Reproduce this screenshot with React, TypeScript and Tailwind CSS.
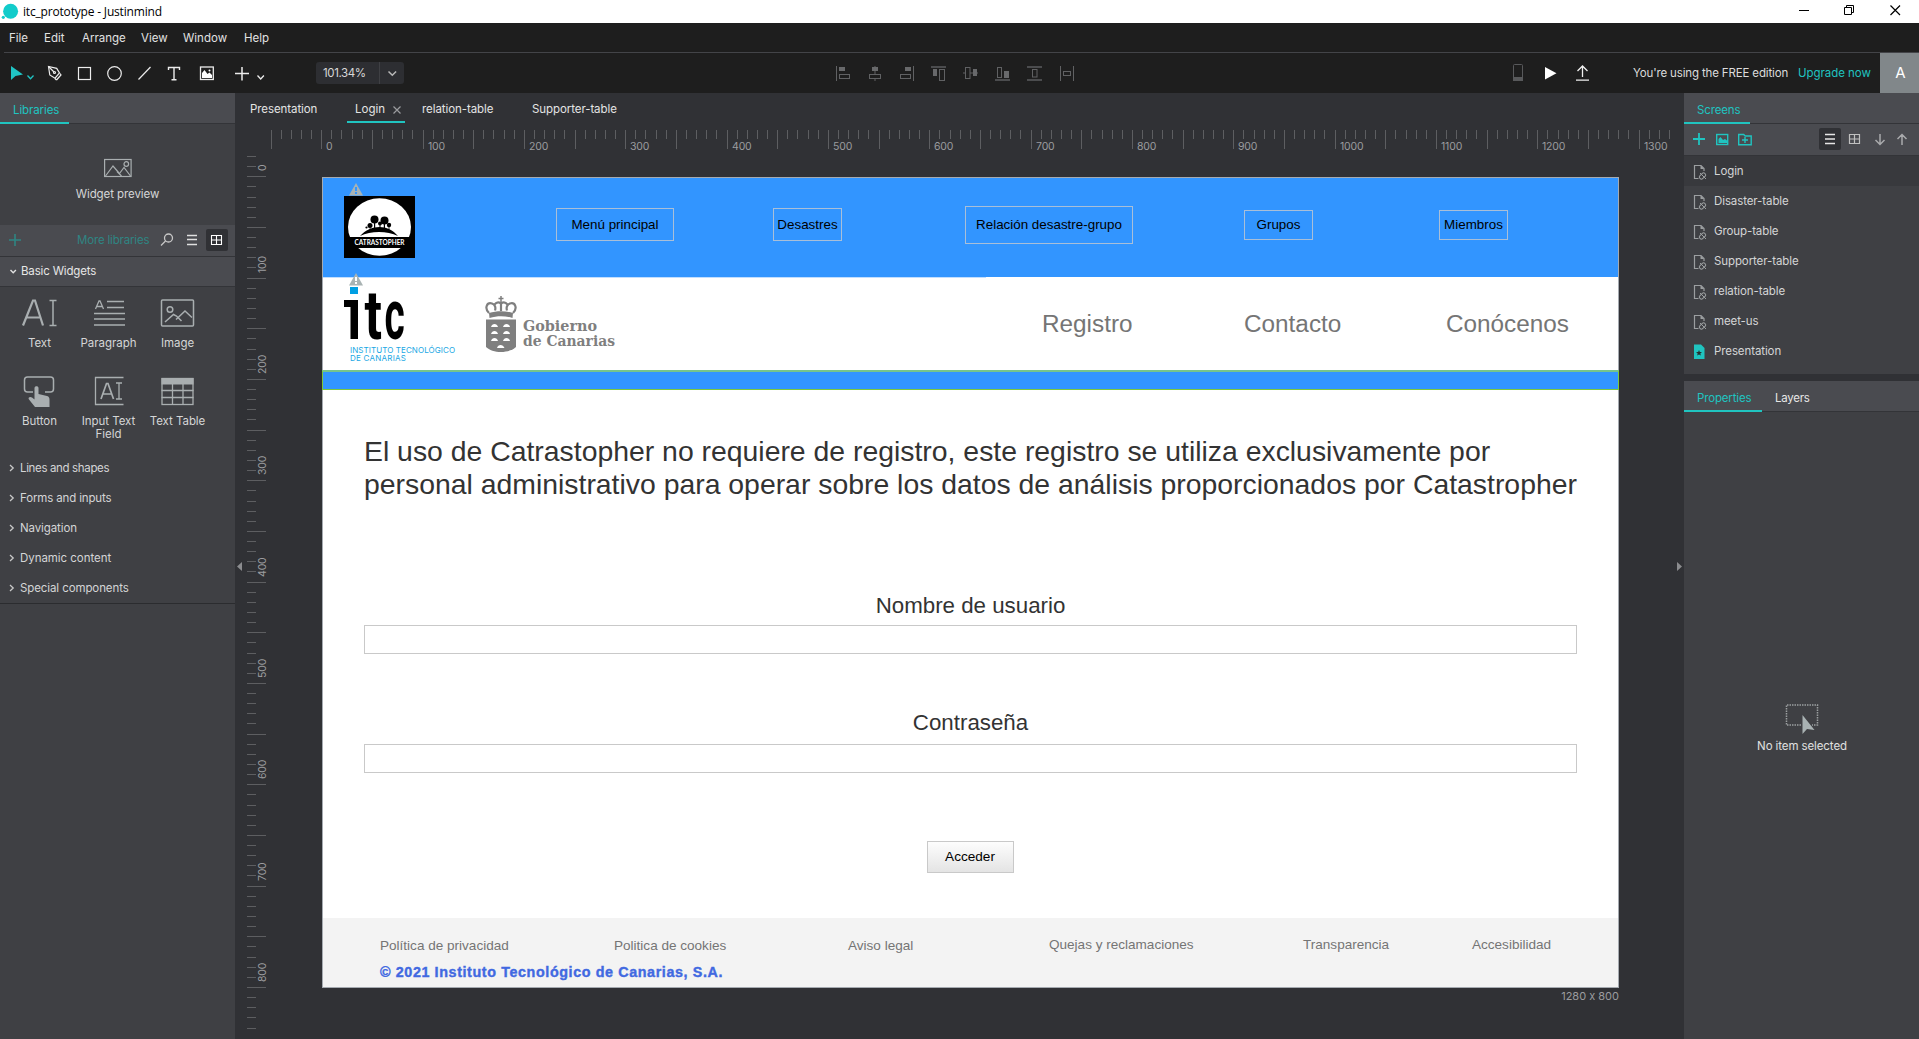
import type { ReactNode } from "react";

/* Icon cell: the viewBox uses window coordinates so neighbouring cells share one grid. */
function Cell({ x, y, w, h, children }: { x: number; y: number; w: number; h: number; children: ReactNode }) {
  return (
    <svg className="block shrink-0" width={w} height={h} viewBox={`${x} ${y} ${w} ${h}`} fill="none">
      {children}
    </svg>
  );
}

function TitleBar() {
  return (
    <div className="flex h-[23px] shrink-0 items-center bg-white">
      <Cell x={0} y={0} w={23} h={23}>
        <circle cx="10.6" cy="11.3" r="7.5" fill="#12cccb" />
        <circle cx="3.3" cy="17.3" r="1.6" fill="#12cccb" />
      </Cell>
      <span className="font-['Open_Sans'] text-[12px] tracking-[-0.18px] text-black">itc_prototype - Justinmind</span>
      <div className="ml-auto flex">
        <Cell x={1780} y={0} w={139} h={23}>
          <g stroke="#000" strokeWidth="1">
            <path d="M1799 10.5h10" />
            <path d="M1844.5 7.5h7v7h-7z" />
            <path d="M1846.5 7.5v-2h7v7h-2" />
            <path d="M1890.5 5.5l9.5 9.5M1900 5.5l-9.5 9.5" strokeWidth="1.2" />
          </g>
        </Cell>
      </div>
    </div>
  );
}

const menu: [string, string][] = [
  ["File", "w-[35px]"],
  ["Edit", "w-[38px]"],
  ["Arrange", "w-[59px]"],
  ["View", "w-[42px]"],
  ["Window", "w-[61px]"],
  ["Help", "w-[40px]"],
];

function MenuBar() {
  return (
    <div className="flex h-[29px] shrink-0 items-center bg-[#1e1e1e] pt-[2px] pl-[9px] text-[11.5px] text-[#e2e2e2]">
      {menu.map(([t, w]) => (
        <span key={t} className={w}>
          {t}
        </span>
      ))}
    </div>
  );
}

function ToolBar() {
  return (
    <div className="flex h-[41px] shrink-0 bg-[#1e1e1e]">
      <div className="ml-1 flex flex-1 border-t border-[#434448]">
        <Cell x={4} y={53} w={40} h={40}>
          <path d="M11 66v14l4.5-4 7.500-1.500z" fill="#20c4c4" />
          <path d="M27.500 75.500l3 3.200 3-3.200" stroke="#20c4c4" strokeWidth="1.300" />
        </Cell>
        <Cell x={44} y={53} w={26} h={40}>
          <g stroke="#ececec" strokeWidth="1.200">
            <path d="M48.500 66.500l1.300 8.500 5.200 3.200 4.500-5.200-2.800-4.600z" />
            <path d="M48.500 66.500l5.500 5.500" />
            <circle cx="54.500" cy="72.500" r="1" />
            <path d="M56.500 80l4.500-5-1-1.500M55 78.500l1.500 1.500" />
          </g>
        </Cell>
        <Cell x={70} y={53} w={30} h={40}>
          <rect x="78.500" y="67.500" width="12" height="12" stroke="#ececec" strokeWidth="1.200" />
        </Cell>
        <Cell x={100} y={53} w={30} h={40}>
          <circle cx="114.500" cy="73.500" r="6.800" stroke="#ececec" strokeWidth="1.200" />
        </Cell>
        <Cell x={130} y={53} w={30} h={40}>
          <path d="M138.500 79.500l12-12.500" stroke="#ececec" strokeWidth="1.200" />
        </Cell>
        <Cell x={160} y={53} w={30} h={40}>
          <path d="M168.500 70v-2.500h11V70M174 67.500v12.500M171.500 79.700h5" stroke="#ececec" strokeWidth="1.400" />
        </Cell>
        <Cell x={190} y={53} w={35} h={40}>
          <rect x="200.500" y="67" width="12.800" height="12.500" stroke="#ececec" strokeWidth="1.300" />
          <path d="M202 78v-5l2.500-3 3 4 2-1.500 2.500 2.500v3z" fill="#fff" />
          <circle cx="209.500" cy="70.500" r="1" fill="#fff" />
        </Cell>
        <Cell x={225} y={53} w={91} h={40}>
          <path d="M235 73.500h14M242 67v13.500" stroke="#ececec" strokeWidth="1.500" />
          <path d="M257.500 75.500l3.200 3.500 3.200-3.500" stroke="#ececec" strokeWidth="1.300" />
        </Cell>
        <div className="mt-[9px] flex h-[22px] w-[88px] items-center rounded-[3px] bg-[#2d2e32] text-[11.500px] text-[#d8d8d8]">
          <span className="w-[63px] pt-[2px] pl-[7px] tracking-[-0.4px]">101.34%</span>
          <span className="h-[22px] w-px bg-[#3f4044]" />
          <Cell x={380} y={62} w={24} h={22}>
            <path d="M388.500 71.500l3.800 3.800 3.800-3.800" stroke="#b8b8b8" strokeWidth="1.500" />
          </Cell>
        </div>
        <div className="ml-[416px]">
          <Cell x={820} y={53} w={270} h={40}>
            <g stroke="#606163" strokeWidth="1">
              <path d="M836.500 66v15M875 66v15M913.500 66v15M963 73h15M1060.500 66v15M1073.500 66v15" />
              <g stroke="#4b4c4e" strokeWidth="2">
                <path d="M931 67h15M995 80h15M1027 67h15M1027 80h15" />
              </g>
              <g fill="#1e1e1e">
                <rect x="839.500" y="74.500" width="10" height="4" />
                <rect x="869.500" y="74.500" width="11" height="4" />
                <rect x="900.500" y="74.500" width="10" height="4" />
                <rect x="939.500" y="69.500" width="5" height="11" />
                <rect x="965.500" y="67.500" width="4.500" height="11" />
                <rect x="997.500" y="67.500" width="4" height="10" />
                <rect x="1032.500" y="69.500" width="4.500" height="7.500" />
                <rect x="1063.500" y="71.500" width="7" height="4" />
              </g>
            </g>
            <g fill="#68696b">
              <path d="M839 67h6v4h-6zM872 67h6v4h-6zM905 67h6v4h-6zM933 69h4v7h-4zM973 69h4v7h-4zM1004 71h5v7h-5z" />
            </g>
          </Cell>
        </div>
        <div className="ml-auto flex">
          <Cell x={1500} y={53} w={100} h={40}>
            <rect x="1513.500" y="64.500" width="9" height="15.500" rx="1" stroke="#58595b" />
            <path d="M1513 77h10v4h-10z" fill="#58595b" />
            <path d="M1545 67l11.500 6.200-11.500 6.200z" fill="#fff" />
            <path d="M1582.500 77V66M1577.500 71l5-5 5 5M1576 80.200h13" stroke="#f0f0f0" strokeWidth="1.300" />
          </Cell>
          <div className="flex items-center pt-[2px] pl-[33px] text-[11.500px]">
            <span className="w-[165px] tracking-[-0.15px] whitespace-nowrap text-[#dcdcdc]">You're using the FREE edition</span>
            <span className="w-[82px] tracking-[-0.05px] whitespace-nowrap text-[#20c4c0]">Upgrade now</span>
          </div>
          <div className="flex h-[40px] w-[39px] items-center justify-center bg-[#81878a] pt-px pl-[2px] text-[15px] text-white">A</div>
        </div>
      </div>
    </div>
  );
}

const widgets: { label: string; icon: ReactNode }[] = [
  {
    label: "Text",
    icon: (
      <g stroke="#a9aeb0" strokeWidth="1.800">
        <path d="M7 30.500L17 5.500h2l8 25M10.500 22.500h13" strokeWidth="2.200" />
        <path d="M33.500 5.500h7M33.500 30.500h7M37 5.500v25" strokeWidth="1.500" />
      </g>
    ),
  },
  {
    label: "Paragraph",
    icon: (
      <g stroke="#a9aeb0" strokeWidth="1.600">
        <path d="M10.500 14l3.500-8h1l3.500 8M12 11.500h5.500" strokeWidth="1.300" />
        <path d="M22 6.500h17M22 12.500h17M9 18.500h31M9 24h31M9 30h31" />
      </g>
    ),
  },
  {
    label: "Image",
    icon: (
      <g stroke="#a9aeb0" strokeWidth="1.500">
        <rect x="7.500" y="5" width="32" height="26" rx="1" />
        <circle cx="16" cy="14.500" r="2.800" />
        <path d="M11 27l8.500-7.500 3 1.500 5 5M22 24.500l9-8.500 7 6.500" />
      </g>
    ),
  },
  {
    label: "Button",
    icon: (
      <g>
        <path d="M18 20h-5.500a3 3 0 0 1-3-3V8a3 3 0 0 1 3-3h23a3 3 0 0 1 3 3v9a3 3 0 0 1-3 3H30" transform="translate(-1 -1)" stroke="#a9aeb0" strokeWidth="1.500" />
        <path d="M19.500 16c0-2.500 4-2.500 4 0v6l8.500 2c2 .5 2.500 2 2.500 4v7H20l-6-7.500c-1.500-2 1-3.500 3-2l2.500 2z" transform="translate(-1 -1)" fill="#a9aeb0" />
      </g>
    ),
  },
  {
    label: "Input Text Field",
    icon: (
      <g stroke="#a9aeb0" strokeWidth="1.300" transform="translate(0 -1)">
        <path d="M38.500 5.500H10.500v27h28" />
        <path d="M16 27l5.500-15.500h1.500L28.500 27M18 22h9" strokeWidth="1.700" />
        <path d="M31 11h6M31 27h6M34 11v16" />
      </g>
    ),
  },
  {
    label: "Text Table",
    icon: (
      <g stroke="#a9aeb0" strokeWidth="1.300" transform="translate(-.5 -1)">
        <rect x="8.500" y="6.500" width="31" height="26" />
        <path d="M8 6h32v6.500H8z" fill="#a9aeb0" stroke="none" />
        <path d="M8 18.500h32M8 25.500h32M19 12v20M29.500 12v20" />
      </g>
    ),
  },
];

const groups: [string, string][] = [
  ["Lines and shapes", "tracking-[-0.35px]"],
  ["Forms and inputs", "tracking-[-0.15px]"],
  ["Navigation", "tracking-[-0.1px]"],
  ["Dynamic content", "tracking-[-0.05px]"],
  ["Special components", "tracking-[-0.1px]"],
];

function LibrariesPanel() {
  return (
    <aside className="flex w-[235px] shrink-0 flex-col bg-[#3f4044] text-[11.500px] text-[#d4d5d6]">
      <div className="flex h-[31px] shrink-0 border-b border-[#333438] bg-[#4a4b50]">
        <div className="-mb-px flex w-[69px] items-center border-b-2 border-[#20c4c0] pt-[7px] pl-[13px] tracking-[-0.1px] text-[#20c4c0]">Libraries</div>
      </div>
      <div className="flex h-[101px] shrink-0 flex-col items-center pt-[34px]">
        <svg width="28" height="20" viewBox="0 0 28 20" fill="none" stroke="#a9aeb0" strokeWidth="1.200">
          <rect x=".6" y="1.500" width="26.500" height="17" />
          <path d="M1.500 18L9 8l6 7M13 13.500l4.500 4.500M15.500 15.500L20 9.500l6.500 8.500" />
          <circle cx="22.300" cy="6" r="2.300" />
        </svg>
        <span className="mt-[8px] tracking-[-0.08px]">Widget preview</span>
      </div>
      <div className="flex h-[32px] shrink-0 items-center border-b border-[#333438] bg-[#4a4b50]">
        <Cell x={0} y={225} w={77} h={31}>
          <path d="M9 240h12M15 234v12" stroke="#2f8583" strokeWidth="1.600" />
        </Cell>
        <span className="w-[73px] tracking-[-0.18px] whitespace-nowrap text-[#2f8583]">More libraries</span>
        <Cell x={150} y={225} w={85} h={31}>
          <rect x="206" y="229" width="22" height="22" rx="2" fill="#303135" />
          <circle cx="168.500" cy="238" r="4" stroke="#c8c8c8" strokeWidth="1.300" />
          <path d="M165.500 241l-4.500 4.500" stroke="#c8c8c8" strokeWidth="1.300" />
          <path d="M187 235.500h10M187 239.500h10M187 244.500h10" stroke="#e0e0e0" strokeWidth="1.300" />
          <path d="M211.500 235.500h10v9h-10zM216.500 235v10M211 240h11" stroke="#fff" strokeWidth="1.100" />
        </Cell>
      </div>
      <div className="flex h-[30px] shrink-0 items-center border-b border-[#333438] bg-[#4a4b50] text-[#e6e6e6]">
        <Cell x={0} y={257} w={21} h={29}>
          <path d="M10.500 270l2.700 2.800 2.700-2.800" stroke="#e0e0e0" strokeWidth="1.400" />
        </Cell>
        <span className="tracking-[-0.16px]">Basic Widgets</span>
      </div>
      <div className="grid h-[166px] shrink-0 grid-cols-[69px_69px_69px] grid-rows-[78px_88px] pl-[5px]">
        {widgets.map((w) => (
          <div key={w.label} className="flex flex-col items-center pt-[8px] text-center">
            <svg width="48" height="38" viewBox="0 0 48 38" fill="none" className="shrink-0">
              {w.icon}
            </svg>
            <span className="mt-[4px] w-[60px] leading-[13px] tracking-[-0.05px]">{w.label}</span>
          </div>
        ))}
      </div>
      <div className="flex h-[151px] shrink-0 flex-col border-b border-[#2b2c2f]">
        {groups.map(([g, tracking]) => (
          <div key={g} className="flex h-[30px] shrink-0 items-center">
            <svg width="20" height="12" viewBox="0 0 20 12" fill="none">
              <path d="M10 3l3.200 3-3.200 3" stroke="#c8c8c8" strokeWidth="1.300" />
            </svg>
            <span className={`pt-[2px] ${tracking}`}>{g}</span>
          </div>
        ))}
      </div>
    </aside>
  );
}

const hTicks = Array.from({ length: 139 }, (_, i) => i - 5);
const vTicks = Array.from({ length: 87 }, (_, i) => i - 2);

function HorizontalRuler() {
  return (
    <svg className="block shrink-0" width="1449" height="28" viewBox="235 125 1449 28" shapeRendering="crispEdges">
      {hTicks.map((n) => (
        <rect key={n} x={Math.floor(321.7 + n * 10.134)} y="130" width="1" height={n % 5 === 0 ? 19 : 9} fill="#5d5e61" />
      ))}
      {hTicks
        .filter((n) => n % 10 === 0)
        .map((n) => (
          <text key={n} x={Math.floor(321.7 + n * 10.134) + 5} y="150" fontSize="10.500" letterSpacing="-.15" fill="#9b9c9f">
            {n * 10}
          </text>
        ))}
    </svg>
  );
}

function VerticalRuler() {
  return (
    <svg className="block shrink-0" width="87" height="886" viewBox="235 153 87 886">
      {vTicks.map((n) => (
        <rect key={n} x="247" y={Math.floor(176.75 + n * 10.134)} width={n % 5 === 0 ? 19 : 9} height="1" fill="#5d5e61" />
      ))}
      {vTicks
        .filter((n) => n % 10 === 0)
        .map((n) => {
          const y = Math.floor(176.75 + n * 10.134) - 5;
          return (
            <text key={n} x="266" y={y} fontSize="10.500" letterSpacing="-.15" fill="#9b9c9f" transform={`rotate(-90 266 ${y})`}>
              {n * 10}
            </text>
          );
        })}
      <path d="M242 562v9l-5-4.500z" fill="#8b8c8f" />
    </svg>
  );
}

function Warning({ mark }: { mark: string }) {
  return (
    <svg width="14" height="13" viewBox="0 0 14 13" className="block">
      <path d="M7 0l7 12.500H0z" fill="#a9b3b3" />
      <path d="M6 4h2v4H6zM6 9h2v2H6z" fill={mark} />
    </svg>
  );
}

function CatastropherLogo() {
  return (
    <svg width="71" height="62" viewBox="0 0 71 62" className="block">
      <rect width="71" height="62" fill="#000" />
      <ellipse cx="35.500" cy="31" rx="31.500" ry="28.800" fill="#fff" />
      <rect y="41" width="71" height="11" fill="#000" />
      <g fill="#000">
        <path d="M16 40c11-12 28-12 38 0-11-5.500-27-5.500-38 0z" />
        <circle cx="30.500" cy="23.500" r="4" />
        <circle cx="40.500" cy="24.500" r="4" />
        <circle cx="26" cy="29.500" r="2.500" />
        <circle cx="45" cy="29" r="2.200" />
        <circle cx="36" cy="27.500" r="2" />
        <circle cx="22.500" cy="31.500" r="1.100" />
        <path d="M30 25h1.200v8H30zM39.800 25H41v8h-1.200zM35.500 28h1v5h-1zM25.700 30h.8v4h-.8zM44.600 30h.8v4h-.8z" />
      </g>
      <text x="10.500" y="49" fontSize="6.800" fontWeight="700" fill="#fff" textLength="50" lengthAdjust="spacingAndGlyphs" fontFamily="Lato, sans-serif">
        CATRASTOPHER
      </text>
    </svg>
  );
}

function ItcLogo() {
  return (
    <svg width="114" height="80" viewBox="344 285 114 80" className="block overflow-visible">
      <defs>
        <clipPath id="stem">
          <rect x="340" y="300" width="30" height="50" />
        </clipPath>
      </defs>
      <g fontFamily="Roboto, sans-serif" fontWeight="700" fontSize="72" fill="#000">
        <g clipPath="url(#stem)">
          <text transform="translate(349.300 339) scale(.5 1.040)">i</text>
        </g>
        <text transform="translate(364.500 338.500) scale(.72 .950)">t</text>
        <text transform="translate(384.500 338.500) scale(.540 .980)">c</text>
      </g>
      <path d="M344 300h14v39h-7.500v-32H344z" fill="#000" />
      <rect x="350" y="287" width="8" height="7" fill="#009fe3" />
      <g fontSize="8" fill="#1aa7e4" fontFamily="Inter, sans-serif">
        <text x="350" y="353" textLength="105">
          INSTITUTO TECNOLÓGICO
        </text>
        <text x="350" y="361" textLength="56">
          DE CANARIAS
        </text>
      </g>
    </svg>
  );
}

function GobiernoLogo() {
  return (
    <svg width="134" height="60" viewBox="484 294 134 60" className="block">
      <g fill="none" stroke="#7f7f7f" strokeWidth="2.200">
        <path d="M501 296v6M498.500 298.500h5" strokeWidth="1.500" />
        <path d="M489 313c-5-5-2-11 3-9.500 3 1 4 4 3 7M513 313c5-5 2-11-3-9.500-3 1-4 4-3 7M494.500 304.500c2-2.500 4.500-2.500 6.500-1 2-1.500 4.500-1.500 6.500 1M501 303v8" />
      </g>
      <path d="M489 313c8-2.500 16-2.500 24 0l-.5 5c-8-2.500-15-2.500-23 0z" fill="#7f7f7f" />
      <path d="M486 319.500h30V347c-3 3-9 5-15 5s-12-2-15-5z" fill="#7f7f7f" />
      <g fill="#fff">
        <path d="M491 327c1-4 6-4 7 0zM503 327c1-4 6-4 7 0zM491 334c1-4 6-4 7 0zM503 334c1-4 6-4 7 0zM491 341c1-4 6-4 7 0zM503 341c1-4 6-4 7 0zM497 348c1-4 6-4 7.500 0z" />
      </g>
      <g fill="#7f7f7f" fontFamily="'DejaVu Serif', serif" fontWeight="700" fontSize="14.500">
        <text x="523" y="331" textLength="74" lengthAdjust="spacingAndGlyphs">
          Gobierno
        </text>
        <text x="523" y="345.500" textLength="92" lengthAdjust="spacingAndGlyphs">
          de Canarias
        </text>
      </g>
    </svg>
  );
}

/* Free-canvas widgets of the prototype; offsets are relative to their section. */
const navButtons: [string, string][] = [
  ["Menú principal", "left-[233px] top-[30px] h-[33px] w-[118px]"],
  ["Desastres", "left-[450px] top-[30px] h-[33px] w-[69px]"],
  ["Relación desastre-grupo", "left-[642px] top-[28px] h-[38px] w-[168px]"],
  ["Grupos", "left-[921px] top-[32px] h-[30px] w-[69px]"],
  ["Miembros", "left-[1116px] top-[32px] h-[30px] w-[69px]"],
];

const footerLinks: [string, string][] = [
  ["Política de privacidad", "left-[57px] top-[19px]"],
  ["Politica de cookies", "left-[291px] top-[19px]"],
  ["Aviso legal", "left-[525px] top-[19px]"],
  ["Quejas y reclamaciones", "left-[726px] top-[18px]"],
  ["Transparencia", "left-[980px] top-[18px]"],
  ["Accesibilidad", "left-[1149px] top-[18px]"],
];

function Page() {
  return (
    <div className="h-[811px] w-[1297px] border border-[#a5aab0] bg-white font-['Liberation_Sans'] whitespace-nowrap text-[#333]">
      <div className="relative h-[99px] bg-[#3295ff] text-black">
        <div className="absolute top-[5px] left-[26px]">
          <Warning mark="#3295ff" />
        </div>
        <div className="absolute top-[18px] left-[21px]">
          <CatastropherLogo />
        </div>
        {navButtons.map(([t, c]) => (
          <div key={t} className={`absolute flex items-center justify-center border border-[#a9bfd8] pt-px text-[13.400px] ${c}`}>
            {t}
          </div>
        ))}
      </div>
      <div className="relative h-[93px]">
        <div className="h-px w-[663px] bg-[#c1deff]" />
        <div className="absolute top-[8px] left-[21px]">
          <ItcLogo />
        </div>
        <div className="absolute top-[-4px] left-[26px]">
          <Warning mark="#ffffff" />
        </div>
        <div className="absolute top-[17px] left-[161px]">
          <GobiernoLogo />
        </div>
        <div className="absolute top-[33px] left-[719px] text-[24.320px] leading-[28px] text-[#757575]">Registro</div>
        <div className="absolute top-[33px] left-[921px] text-[24.320px] leading-[28px] text-[#757575]">Contacto</div>
        <div className="absolute top-[33px] left-[1123px] text-[24.320px] leading-[28px] text-[#757575]">Conócenos</div>
      </div>
      <div className="-mx-px h-[20px] border border-t-2 border-[#7cc83c] border-t-[#76c48c] bg-[#3295ff]" />
      <div className="flex h-[528px] flex-col px-[41px]">
        <p className="mt-[45px] h-[66px] text-[28.390px] leading-[33px]">
          El uso de Catrastopher no requiere de registro, este registro se utiliza exclusivamente por
          <br />
          personal administrativo para operar sobre los datos de análisis proporcionados por Catastropher
        </p>
        <label className="mt-[91px] block h-[28px] text-center text-[22.300px] leading-[28px]">Nombre de usuario</label>
        <div className="mt-[5px] h-[29px] w-[1213px] shrink-0 border border-[#c9c9c9]" />
        <label className="mt-[55px] block h-[28px] text-center text-[22.300px] leading-[28px]">Contraseña</label>
        <div className="mt-[7px] h-[29px] w-[1213px] shrink-0 border border-[#c9c9c9]" />
        <div className="mt-[68px] mr-px flex h-[32px] w-[87px] items-center justify-center self-center border border-[#c9c9c9] bg-linear-to-b from-[#fdfdfd] to-[#e4e4e4] pt-px text-[13.600px] text-black">
          Acceder
        </div>
      </div>
      <div className="relative h-[69px] bg-[#f3f3f3] text-[13.550px] text-[#757575]">
        {footerLinks.map(([t, c]) => (
          <span key={t} className={`absolute leading-[17px] ${c}`}>
            {t}
          </span>
        ))}
        <span className="absolute top-[46px] left-[57px] text-[14.300px] leading-[17px] font-bold tracking-[0.620px] text-[#4169e1] [-webkit-text-stroke:0.400px_#4169e1]">
          © 2021 Instituto Tecnológico de Canarias, S.A.
        </span>
      </div>
    </div>
  );
}

function Editor() {
  return (
    <main className="flex w-[1449px] shrink-0 flex-col bg-[#303135]">
      <div className="flex h-[32px] shrink-0 pl-[15px] text-[11.500px] text-[#e4e4e4]">
        <span className="flex h-[32px] w-[97px] items-center pt-[2px] tracking-[-0.08px]">Presentation</span>
        <span className="flex h-[30px] w-[58px] items-center justify-between border-b-2 border-[#20c4c0] pt-[6px] pr-[4px] pl-[8px]">
          Login
          <svg width="8" height="8" viewBox="0 0 8 8" stroke="#9b9c9f" strokeWidth="1.200">
            <path d="M.5.5l7 7M7.500.5l-7 7" />
          </svg>
        </span>
        <span className="flex h-[32px] w-[110px] items-center pt-[2px] pl-[17px] tracking-[-0.08px]">relation-table</span>
        <span className="flex h-[32px] items-center pt-[2px] pl-[17px] tracking-[-0.08px]">Supporter-table</span>
      </div>
      <HorizontalRuler />
      <div className="flex h-[886px]">
        <VerticalRuler />
        <div className="flex w-[1297px] flex-col pt-[24px]">
          <Page />
          <span className="mt-[1px] self-end text-[11px] leading-[15px] text-[#9b9c9f] [font-feature-settings:'calt'_0]">1280 x 800</span>
        </div>
        <div className="flex-1">
          <Cell x={1619} y={153} w={65} h={886}>
            <path d="M1677 562v9l5-4.500z" fill="#8b8c8f" />
          </Cell>
        </div>
      </div>
    </main>
  );
}

const screens = ["Login", "Disaster-table", "Group-table", "Supporter-table", "relation-table", "meet-us", "Presentation"];

function ScreenIcon({ home }: { home: boolean }) {
  return home ? (
    <svg width="14" height="16" viewBox="0 0 14 16">
      <path d="M1 .5h7l3.500 3.500v11H1z" fill="#20c4c0" />
      <path d="M6 6l.8 2 2.200.1-1.700 1.400.6 2.100L6 10.400l-1.900 1.200.6-2.100L3 8.100 5.200 8z" fill="#26302f" />
    </svg>
  ) : (
    <svg width="14" height="16" viewBox="0 0 14 16" fill="none" stroke="#9b9ea0" strokeWidth="1.200">
      <path d="M5.500 14.500H1.500v-13H8l3 3V7" />
      <path d="M7.500 1v4H11z" fill="#9b9ea0" stroke="none" />
      <g strokeWidth="1">
        <rect x="7.500" y="8.500" width="4" height="7" rx="2" transform="rotate(45 9.500 12)" />
        <path d="M7 9l6 6" />
      </g>
    </svg>
  );
}

function RightPanel() {
  return (
    <aside className="flex w-[235px] shrink-0 flex-col bg-[#3f4044] text-[11.500px] text-[#d4d5d6]">
      <div className="flex h-[31px] shrink-0 border-b border-[#333438] bg-[#4a4b50]">
        <div className="-mb-px flex w-[66px] items-center border-b-2 border-[#20c4c0] pt-[7px] pl-[13px] tracking-[-0.15px] text-[#20c4c0]">Screens</div>
      </div>
      <div className="flex h-[32px] shrink-0 justify-between border-b border-[#333438] bg-[#4a4b50]">
        <Cell x={1684} y={124} w={90} h={31}>
          <g stroke="#20c4c0" strokeWidth="1.400">
            <path d="M1693 139h12M1699 133v12" strokeWidth="1.800" />
            <rect x="1716.700" y="134.500" width="11" height="10" />
            <path d="M1738.700 134.500h5l1.500 1.500h6v8.700h-12.500zM1742 140h6M1745 137v6" />
          </g>
          <path d="M1718.500 143v-4l2-2 2.500 3 2-1 2 1.500v2.500z" fill="#20c4c0" />
        </Cell>
        <Cell x={1810} y={124} w={109} h={31}>
          <rect x="1819" y="128" width="22" height="22" rx="2" fill="#303135" />
          <path d="M1825 134.500h10M1825 139h10M1825 143.500h10" stroke="#e6e6e6" strokeWidth="1.300" />
          <path d="M1849.500 134.500h10v9h-10zM1854.500 134v10M1849 139h11" stroke="#c0c0c0" strokeWidth="1.200" />
          <path d="M1880 134v10M1875.500 140l4.500 4.500 4.500-4.500M1902 145v-10M1897.500 139l4.500-4.500 4.500 4.500" stroke="#a9aaac" strokeWidth="1.500" />
        </Cell>
      </div>
      <div className="flex h-[218px] shrink-0 flex-col">
        {screens.map((s, i) => (
          <div key={s} className={`flex h-[30px] shrink-0 items-center gap-[7px] pt-px pl-[9px] ${i === 0 ? "bg-[#38393d]" : ""}`}>
            <ScreenIcon home={i === 6} />
            <span className="pt-px tracking-[-0.1px]">{s}</span>
          </div>
        ))}
      </div>
      <div className="h-[7px] shrink-0 bg-[#303135]" />
      <div className="flex h-[31px] shrink-0 border-b border-[#333438] bg-[#4a4b50]">
        <div className="-mb-px flex w-[78px] items-center border-b-2 border-[#20c4c0] pt-[7px] pl-[13px] tracking-[-0.15px] text-[#20c4c0]">Properties</div>
        <div className="flex items-center pt-[6px] pl-[13px] tracking-[-0.25px] text-[#e6e6e6]">Layers</div>
      </div>
      <div className="flex flex-1 flex-col items-center pt-[291px]">
        <svg width="34" height="32" viewBox="0 0 34 32" fill="none">
          <path d="M16 22H1.500V2h31v20H27" stroke="#9b9ea0" strokeWidth="1.500" strokeDasharray="1.500 1" />
          <path d="M17.500 12v19l4.500-5 7.500 1z" fill="#a9b2b3" />
        </svg>
        <span className="mt-[3px] pl-[1px] tracking-[-0.1px] text-[#e0e0e0]">No item selected</span>
      </div>
    </aside>
  );
}

export default function App() {
  return (
    <div className="flex h-[1039px] w-[1919px] flex-col overflow-hidden bg-[#303135] font-[Inter]">
      <TitleBar />
      <MenuBar />
      <ToolBar />
      <div className="flex h-[946px] shrink-0">
        <LibrariesPanel />
        <Editor />
        <RightPanel />
      </div>
    </div>
  );
}
